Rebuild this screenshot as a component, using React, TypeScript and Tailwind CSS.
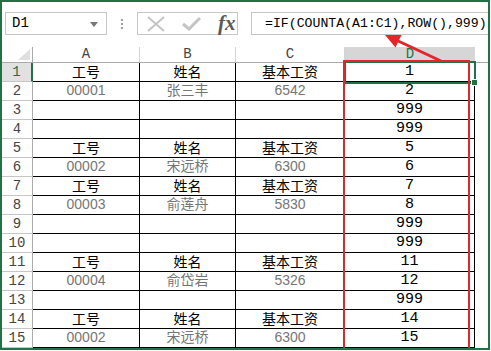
import React from 'react';

type Row = { kind: 'head' | 'data' | 'empty'; a?: string; b?: string; c?: string; d: string };

const rows: Row[] = [
  { kind: 'head', a: '工号', b: '姓名', c: '基本工资', d: '1' },
  { kind: 'data', a: '00001', b: '张三丰', c: '6542', d: '2' },
  { kind: 'empty', d: '999' },
  { kind: 'empty', d: '999' },
  { kind: 'head', a: '工号', b: '姓名', c: '基本工资', d: '5' },
  { kind: 'data', a: '00002', b: '宋远桥', c: '6300', d: '6' },
  { kind: 'head', a: '工号', b: '姓名', c: '基本工资', d: '7' },
  { kind: 'data', a: '00003', b: '俞莲舟', c: '5830', d: '8' },
  { kind: 'empty', d: '999' },
  { kind: 'empty', d: '999' },
  { kind: 'head', a: '工号', b: '姓名', c: '基本工资', d: '11' },
  { kind: 'data', a: '00004', b: '俞岱岩', c: '5326', d: '12' },
  { kind: 'empty', d: '999' },
  { kind: 'head', a: '工号', b: '姓名', c: '基本工资', d: '14' },
  { kind: 'data', a: '00002', b: '宋远桥', c: '6300', d: '15' },
];

const mono = "font-['Liberation_Mono','Noto_Sans_CJK_SC',monospace]";
const cjk = "font-['Liberation_Sans','Noto_Sans_CJK_SC',sans-serif]";

const Cell = ({ text, kind }: { text?: string; kind: Row['kind'] }) => (
  <div
    className={`flex items-center justify-center border-r border-b border-black text-[14px] leading-none ${cjk} ${
      kind === 'data' ? 'text-[#767676] pb-[2px]' : 'text-black'
    }`}
  >
    {text}
  </div>
);

export default function App() {
  return (
    <div className="w-[491px] h-[351px] bg-white">
      <div className="relative w-[490px] h-[350px] border-2 border-[#217346] overflow-hidden bg-white">
        {/* formula bar */}
        <div className="flex h-[45px] pt-[10px] pl-[3px]">
          <div className="relative flex items-center w-[102px] h-[23px] border border-[#c6c6c6] pl-[6px]">
            <span className={`${mono} text-[14px] text-black`}>D1</span>
            <svg className="absolute right-[8px] top-[9px]" width="8" height="5" viewBox="0 0 8 5">
              <polygon points="0,0 8,0 4,5" fill="#777" />
            </svg>
          </div>
          <div className="flex flex-col items-center justify-center gap-[2px] w-[30px] h-[23px]">
            <span className="w-[2px] h-[2px] bg-[#a0a0a0]" />
            <span className="w-[2px] h-[2px] bg-[#a0a0a0]" />
            <span className="w-[2px] h-[2px] bg-[#a0a0a0]" />
          </div>
          <div className="flex items-center w-[101px] h-[23px] border border-[#c6c6c6]">
            <svg className="ml-[9px]" width="18" height="16" viewBox="0 0 18 16">
              <path d="M1 1 L17 15 M17 1 L1 15" stroke="#c4c4c4" strokeWidth="2" fill="none" />
            </svg>
            <svg className="ml-[17px]" width="19" height="15" viewBox="0 0 19 15">
              <path d="M1 8 L7 13 L18 2" stroke="#c4c4c4" strokeWidth="3" fill="none" />
            </svg>
            <span className="ml-[17px] font-['Liberation_Serif',serif] italic font-bold text-[21px] leading-none text-[#5a5a5a]">
              fx
            </span>
          </div>
          <div className="ml-[13px] flex-1 flex items-center h-[23px] border-l border-t border-b border-[#c6c6c6] pl-[13px]">
            <span className={`${mono} text-[13.2px] text-black whitespace-nowrap`}>=IF(COUNTA(A1:C1),ROW(),999)</span>
          </div>
        </div>

        {/* sheet */}
        <div className="grid grid-cols-[31px_107px_96px_109px_130px_13px] grid-rows-[16px_repeat(15,19px)]">
          <div className="relative border-r border-b border-[#ababab] bg-white">
            <svg className="absolute right-[2px] bottom-[2px]" width="12" height="11" viewBox="0 0 12 11">
              <polygon points="12,0 12,11 0,11" fill="#dfdfdf" />
            </svg>
          </div>
          {['A', 'B', 'C'].map((c) => (
            <div
              key={c}
              className={`flex items-center justify-center border-r border-b border-r-[#d4d4d4] border-b-[#ababab] ${mono} text-[14px] text-[#444]`}
            >
              {c}
            </div>
          ))}
          <div className={`flex items-center justify-center bg-[#d6d6d6] border-b-2 border-[#217346] ${mono} text-[14px] text-[#217346]`}>
            D
          </div>
          <div className="border-b border-[#ababab]" />

          {rows.map((r, i) => (
            <React.Fragment key={i}>
              <div
                className={`flex items-center justify-center border-b border-[#c6c6c6] ${mono} text-[14px] ${
                  i === 0
                    ? 'bg-[#e1e1e1] text-[#217346] border-r-2 border-r-[#217346]'
                    : 'text-[#444] border-r border-r-[#ababab]'
                }`}
              >
                {i + 1}
              </div>
              <Cell text={r.a} kind={r.kind} />
              <Cell text={r.b} kind={r.kind} />
              <Cell text={r.c} kind={r.kind} />
              <div className={`flex items-center justify-center border-r border-b border-black ${mono} text-[15px] text-black`}>
                {r.d}
              </div>
              <div />
            </React.Fragment>
          ))}
        </div>

        {/* active cell D1 */}
        <div className="absolute left-[342px] top-[59px] w-[132px] h-[23px] border-2 border-[#217346]" />
        <div className="absolute left-[469px] top-[77px] w-[7px] h-[7px] bg-[#217346] border border-white" />

        {/* red highlight */}
        <div className="absolute left-[341px] top-[58px] w-[127px] h-[300px] border-2 border-[#e3262b]" />

        {/* arrow, coordinates in page pixels */}
        <svg className="absolute left-0 top-0 pointer-events-none" width="490" height="350" viewBox="2 2 490 350">
          <line x1="441" y1="61" x2="396" y2="40" stroke="#e3262b" strokeWidth="3" />
          <polygon points="385,35 401.5,35 395.5,47.5" fill="#e3262b" />
        </svg>
      </div>
    </div>
  );
}
